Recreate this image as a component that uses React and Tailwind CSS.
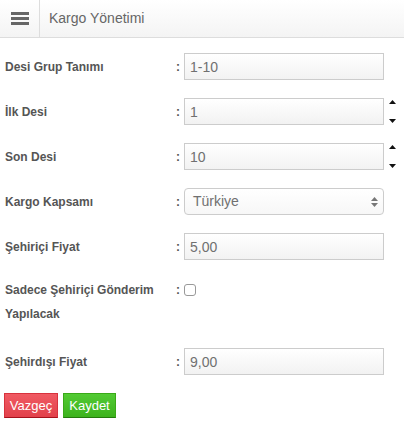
import React from 'react';

const inputCls =
  'w-[200px] h-[27px] border border-[#cccccc] bg-gradient-to-b from-[#ffffff] to-[#f2f2f2] px-[5px] text-[14px] text-[#707070] outline-none';

function Spinner() {
  return (
    <div className="ml-[5px] flex h-[27px] flex-col justify-between py-[2px]">
      <svg width="7" height="4" viewBox="0 0 7 4"><path d="M0 4 L3.5 0 L7 4 Z" fill="#111" /></svg>
      <svg width="7" height="4" viewBox="0 0 7 4"><path d="M0 0 L3.5 4 L7 0 Z" fill="#111" /></svg>
    </div>
  );
}

function Row({ label, children, tall }) {
  return (
    <div className={`flex ${tall ? 'h-[70px] items-start pt-[9px]' : 'h-[45px] items-center'}`}>
      <div className={`w-[171px] font-bold text-[12px] text-[#555] ${tall ? 'leading-[24px]' : ''}`}>{label}</div>
      <div className={`w-[8px] font-bold text-[12px] text-[#555] ${tall ? 'leading-[24px]' : ''}`}>:</div>
      {children}
    </div>
  );
}

export default function App() {
  return (
    <div className="w-[404px] h-[432px] bg-white" style={{ fontFamily: '"Liberation Sans", Arial, sans-serif' }}>
      <div className="flex h-[38px] border-b border-[#dddddd] bg-gradient-to-b from-[#ffffff] to-[#f4f4f4]">
        <div className="flex w-[40px] items-center justify-center border-r border-[#dddddd]">
          <div className="flex w-[18px] flex-col gap-[2px]">
            <div className="h-[3px] bg-[#666]" />
            <div className="h-[3px] bg-[#666]" />
            <div className="h-[3px] bg-[#666]" />
          </div>
        </div>
        <div className="flex items-center pl-[9px] text-[14px] text-[#666]">Kargo Yönetimi</div>
      </div>

      <div className="pl-[5px] pt-[6px]">
        <Row label="Desi Grup Tanımı">
          <input className={inputCls} defaultValue="1-10" />
        </Row>
        <Row label="İlk Desi">
          <input className={inputCls} defaultValue="1" />
          <Spinner />
        </Row>
        <Row label="Son Desi">
          <input className={inputCls} defaultValue="10" />
          <Spinner />
        </Row>
        <Row label="Kargo Kapsamı">
          <div className="relative flex w-[200px] h-[27px] items-center rounded-[4px] border border-[#cccccc] bg-gradient-to-b from-[#ffffff] to-[#f7f7f7] pl-[8px] text-[14px] text-[#707070]">
            Türkiye
            <svg className="absolute right-[5px] top-[8px]" width="7" height="10" viewBox="0 0 7 10">
              <path d="M0 4 L3.5 0 L7 4 Z" fill="#777" />
              <path d="M0 6 L3.5 10 L7 6 Z" fill="#777" />
            </svg>
          </div>
        </Row>
        <Row label="Şehiriçi Fiyat">
          <input className={inputCls} defaultValue="5,00" />
        </Row>
        <Row label={<>Sadece Şehiriçi Gönderim<br />Yapılacak</>} tall>
          <div className="flex h-[24px] items-center">
            <div className="h-[12px] w-[12px] rounded-[3px] border border-[#999] bg-white" />
          </div>
        </Row>
        <Row label="Şehirdışı Fiyat">
          <input className={inputCls} defaultValue="9,00" />
        </Row>

        <div className="mt-[9px] -ml-[1px] flex gap-[5px]">
          <button className="h-[25px] w-[54px] border border-[#d8323d] border-b-[#a5121c] bg-gradient-to-b from-[#f05a63] to-[#e2414b] text-[13px] text-white">
            Vazgeç
          </button>
          <button className="h-[25px] w-[53px] border border-[#3aa918] border-b-[#237a0c] bg-gradient-to-b from-[#52cb33] to-[#3cb21c] text-[13px] text-white">
            Kaydet
          </button>
        </div>
      </div>
    </div>
  );
}
